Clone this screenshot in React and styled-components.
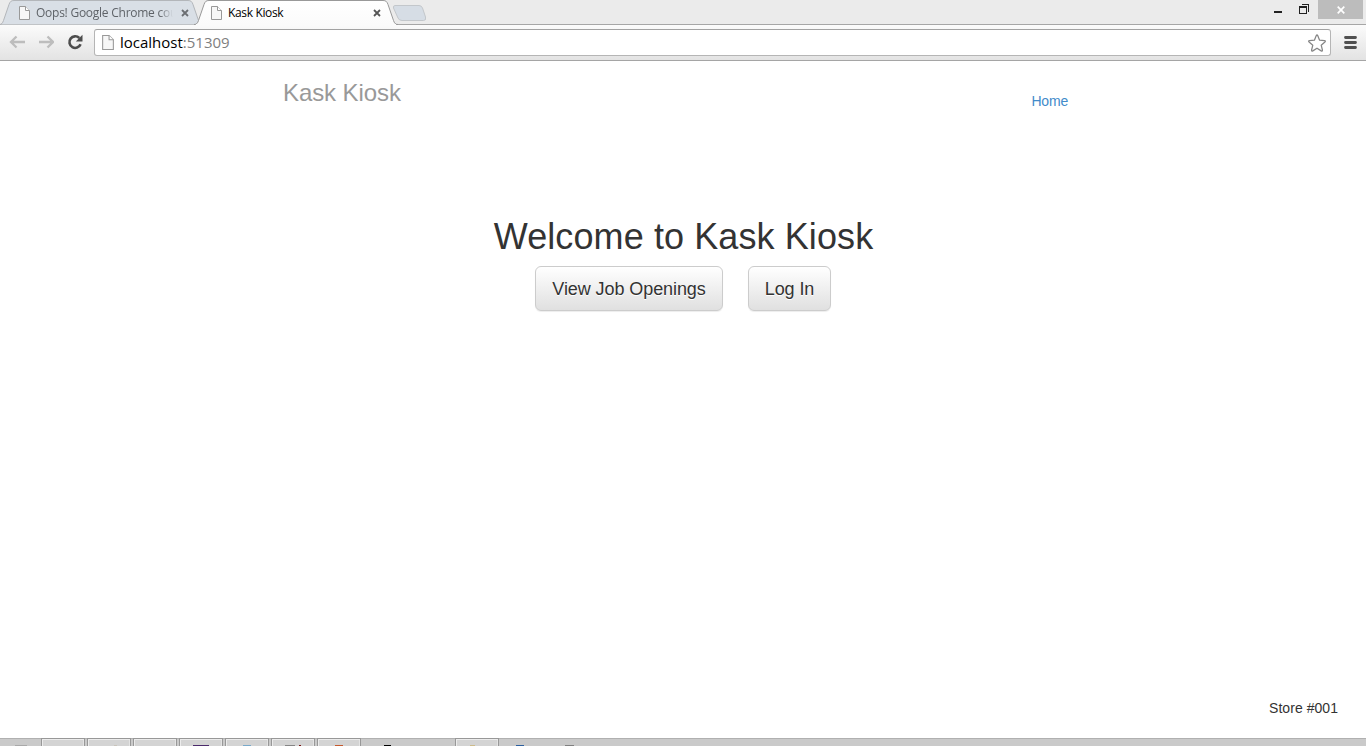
import React from 'react';
import styled, { createGlobalStyle } from 'styled-components';

const GlobalStyle = createGlobalStyle`
  * { box-sizing: border-box; }
  body { margin: 0; overflow: hidden; background: #fff; }
`;

const Window = styled.div`
  display: flex;
  flex-direction: column;
  width: 1366px;
  height: 746px;
  overflow: hidden;
  background: #fff;
  font-family: 'Liberation Sans', Arial, sans-serif;
  color: #333;
`;

const TabStrip = styled.div`
  display: flex;
  flex: none;
  height: 25px;
  padding-right: 3px;
  background: linear-gradient(#ebebeb 0 24px, #a6a6a6 24px);
`;

const TabFrame = styled.div`
  display: grid;
  flex: none;
  width: 204px;
  height: 25px;
  margin-left: ${(p) => p.$offset}px;
  z-index: ${(p) => (p.$active ? 1 : 0)};
  > * { grid-area: 1 / 1; }
`;

const TabContent = styled.div`
  display: flex;
  align-items: center;
  padding: 0 0 0 ${(p) => p.$inset}px;
  height: 25px;
  z-index: 1;
`;

const TabTitle = styled.span`
  flex: none;
  width: ${(p) => p.$width}px;
  margin-left: 6px;
  white-space: nowrap;
  font: 12px/16px 'Open Sans', 'Noto Sans', sans-serif;
  letter-spacing: ${(p) => p.$tracking}px;
  color: ${(p) => (p.$active ? '#000' : '#5f6368')};
  mask-image: ${(p) => (p.$active ? 'none' : 'linear-gradient(90deg, #000 90%, transparent)')};
`;

const NewTab = styled.svg`
  flex: none;
  margin: 4px 0 0 -7px;
`;

const WindowControls = styled.div`
  display: flex;
  margin-left: auto;
  height: 19px;
`;

const CloseButton = styled.div`
  display: flex;
  align-items: center;
  justify-content: center;
  width: 45px;
  height: 19px;
  margin-left: 8px;
  background: #bcbcbc;
`;

const Toolbar = styled.div`
  display: flex;
  flex: none;
  align-items: center;
  height: 36px;
  padding: 0 9px;
  border-bottom: 1px solid #a5a5a5;
  background: linear-gradient(#fbfbfb, #e3e3e3);
`;

const NavIcons = styled.div`
  display: flex;
  flex: none;
  gap: 13px;
  width: 85px;
  padding-bottom: 1px;
`;

const AddressBar = styled.div`
  display: flex;
  align-items: center;
  width: 1237px;
  height: 27px;
  padding: 0 4px 0 7px;
  border: 1px solid #b5b5b5;
  border-top-color: #a2a2a2;
  border-radius: 3px;
  background: #fff;
`;

const Url = styled.span`
  flex: 1;
  margin: 0 0 2px 6px;
  font: 15px/20px 'Open Sans', 'Noto Sans', sans-serif;
  color: #000;
`;

const Port = styled.span`
  color: #808080;
`;

const MenuButton = styled.svg`
  margin-left: auto;
`;

const Page = styled.main`
  display: flex;
  flex-direction: column;
  flex: 1;
  min-height: 0;
`;

const Header = styled.header`
  display: flex;
  justify-content: space-between;
  padding: 17px 298px 0 283px;
  height: 154px;
`;

const Brand = styled.div`
  font-size: 24px;
  line-height: 30px;
  letter-spacing: -0.08px;
  color: #999;
`;

const NavLink = styled.a`
  margin-top: 13px;
  font-size: 14px;
  line-height: 20px;
  letter-spacing: -0.2px;
  color: #428bca;
`;

const Hero = styled.section`
  display: flex;
  flex-direction: column;
  align-items: center;
`;

const Title = styled.h1`
  margin: 2px 0 9px;
  padding-left: 1px;
  font-size: 36px;
  font-weight: 400;
  line-height: 40px;
  letter-spacing: 0.1px;
`;

const Actions = styled.div`
  display: flex;
  gap: 25px;
`;

const ActionButton = styled.button`
  width: ${(p) => p.$width}px;
  height: 45px;
  padding: 0;
  border: 1px solid #ccc;
  border-radius: 6px;
  background: linear-gradient(#fff, #e0e0e0);
  box-shadow: inset 0 1px 0 rgba(255, 255, 255, 0.15), 0 1px 1px rgba(0, 0, 0, 0.075);
  font-family: inherit;
  font-size: 18px;
  line-height: 24px;
  letter-spacing: -0.08px;
  text-shadow: 0 1px 0 #fff;
  white-space: nowrap;
  color: #333;
`;

const Store = styled.footer`
  margin: auto 28px 20px auto;
  font-size: 14px;
  line-height: 20px;
  letter-spacing: 0.05px;
`;

const Taskbar = styled.div`
  display: flex;
  flex: none;
  gap: 2px;
  height: 8px;
  border-top: 1px solid #b0b0b0;
  background: #cacaca;
`;

const TaskItem = styled.div`
  display: flex;
  align-items: flex-end;
  flex: none;
  width: ${(p) => p.$width || 44}px;
  height: 8px;
  margin-top: -1px;
  padding-left: ${(p) => p.$inset || 0}px;
  gap: 4px;
  ${(p) => p.$open && `
    border: solid #989898;
    border-width: 1px 1px 0;
    box-shadow: inset 1px 1px 0 #ececec, inset -1px 0 0 #e4e4e4;
    background: #d4d4d4;
  `}
`;

const IconEdge = styled.i`
  width: ${(p) => p.$width}px;
  height: 1px;
  background: ${(p) => p.$color};
`;

const PageIcon = ({ width = 11, height = 14 }) => (
  <svg width={width} height={height} viewBox="0 0 11 14">
    <path d="M.5.5h6l4 4v9H.5z" fill="#f7f7f7" stroke="#999" />
    <path d="M6.5.5v4h4" fill="#fff" stroke="#999" />
  </svg>
);

const TabClose = ({ color }) => (
  <svg width="8" height="8" viewBox="0 0 8 8">
    <path d="M1 1l6 6M7 1L1 7" stroke={color} strokeWidth="1.8" />
  </svg>
);

const TabShape = ({ active }) => (
  <svg width="204" height="25" viewBox="0 0 204 25">
    <defs>
      <linearGradient id="activeTab" x2="0" y2="1">
        <stop offset="0" stopColor="#fff" />
        <stop offset="1" stopColor="#fbfbfb" />
      </linearGradient>
    </defs>
    <path
      d="M0 24.5C3 24.5 3.5 23 4.5 20.5L10 4.5C11 1.7 12 .5 15 .5H189C192 .5 193 1.7 194 4.5L199.500 20.500C200.500 23 201 24.500 204 24.500"
      fill={active ? 'url(#activeTab)' : '#d9dfe6'}
      stroke={active ? '#999' : '#b3b6ba'}
    />
    {active && <path d="M2 24.500H202" stroke="#fbfbfb" />}
  </svg>
);

const tasks = [
  { width: 39, inset: 15, edges: [[12, '#a9a9a9']] },
  { open: true },
  { open: true, inset: 26, edges: [[3, '#c9c4bb']] },
  { open: true },
  { open: true, inset: 13, edges: [[16, '#4b2a6b']] },
  { open: true, inset: 17, edges: [[8, '#79a9ca']] },
  { open: true, inset: 13, edges: [[10, '#858585'], [2, '#7a1515']] },
  { open: true, inset: 17, edges: [[8, '#c65a2e']] },
  { inset: 21, edges: [[7, '#000']] },
  {},
  { open: true, inset: 14, edges: [[5, '#cdbb8a']] },
  { inset: 15, edges: [[8, '#2c5f9e']] },
  { inset: 18, edges: [[9, '#808080']] },
];

export default function App() {
  return (
    <Window>
      <GlobalStyle />
      <TabStrip>
        <TabFrame $offset={-1}>
          <TabShape />
          <TabContent $inset={20}>
            <PageIcon />
            <TabTitle $width={137} $tracking={-0.25}>Oops! Google Chrome cou</TabTitle>
            <svg width="8" height="1" />
            <TabClose color="#6b6e72" />
          </TabContent>
        </TabFrame>
        <TabFrame $offset={-9} $active>
          <TabShape active />
          <TabContent $inset={17}>
            <PageIcon />
            <TabTitle $active $width={145} $tracking={-0.35}>Kask Kiosk</TabTitle>
            <TabClose color="#555" />
          </TabContent>
        </TabFrame>
        <NewTab width="36" height="18" viewBox="0 0 36 18">
          <path d="M4 1.500H28Q30.500 1.500 31.500 4L34.500 13Q35.500 16.500 32.500 16.500H11Q8 16.500 7 14L2.500 4Q2 1.500 4 1.500Z" fill="#d6dde5" stroke="#c3c7cb" />
        </NewTab>
        <WindowControls>
          <svg width="36" height="19" viewBox="0 0 36 19" shapeRendering="crispEdges">
            <path d="M0 11h8v2H0z" fill="#222" />
            <path d="M27.500 4.500h7v7" fill="none" stroke="#222" />
            <path d="M25 6h8v8h-8zM26 8v5h6V8z" fill="#222" fillRule="evenodd" />
          </svg>
          <CloseButton>
            <svg width="8" height="8" viewBox="0 0 8 8">
              <path d="M.7.700l6.600 6.600M7.300.700L.700 7.300" stroke="#fff" strokeWidth="1.700" />
            </svg>
          </CloseButton>
        </WindowControls>
      </TabStrip>
      <Toolbar>
        <NavIcons>
          <svg width="16" height="16" viewBox="0 0 16 16">
            <path d="M7.500 2.500L2 8l5.500 5.500M2 8h14" fill="none" stroke="#bdbdbd" strokeWidth="2.300" />
          </svg>
          <svg width="16" height="16" viewBox="-1 0 16 16">
            <path d="M8.500 2.500L14 8l-5.500 5.500M14 8H0" fill="none" stroke="#bdbdbd" strokeWidth="2.300" />
          </svg>
          <svg width="16" height="16" viewBox="0 0 16 16">
            <path d="M12.300 4A5.800 5.800 0 1 0 13.600 10.300" fill="none" stroke="#4d4d4d" strokeWidth="2.600" />
            <path d="M15.500 .8v6.700H8.800z" fill="#4d4d4d" />
          </svg>
        </NavIcons>
        <AddressBar>
          <PageIcon width={12} height={15} />
          <Url>localhost<Port>:51309</Port></Url>
          <svg width="18" height="18" viewBox="0 0 18 18">
            <path d="M8.300 1.600Q9 .3 9.700 1.600L11.600 6.200L16.500 6.600Q18 6.900 16.900 8L13.200 11.200L14.400 16Q14.500 17.500 13.200 16.900L9 14.200L4.800 16.900Q3.500 17.500 3.600 16L4.800 11.200L1.100 8Q0 6.900 1.500 6.600L6.400 6.200Z" fill="#fff" stroke="#858585" strokeWidth="1.250" strokeLinejoin="round" />
          </svg>
        </AddressBar>
        <MenuButton width="13" height="13" viewBox="0 0 13 13">
          <path d="M1.500 1.500h10M1.500 6.500h10M1.500 11.500h10" stroke="#505050" strokeWidth="2.800" strokeLinecap="round" />
        </MenuButton>
      </Toolbar>
      <Page>
        <Header>
          <Brand>Kask Kiosk</Brand>
          <NavLink>Home</NavLink>
        </Header>
        <Hero>
          <Title>Welcome to Kask Kiosk</Title>
          <Actions>
            <ActionButton $width={188}>View Job Openings</ActionButton>
            <ActionButton $width={83}>Log In</ActionButton>
          </Actions>
        </Hero>
        <Store>Store #001</Store>
      </Page>
      <Taskbar>
        {tasks.map((task, i) => (
          <TaskItem key={i} $open={task.open} $width={task.width} $inset={task.inset}>
            {(task.edges || []).map(([width, color], j) => (
              <IconEdge key={j} $width={width} $color={color} />
            ))}
          </TaskItem>
        ))}
      </Taskbar>
    </Window>
  );
}
